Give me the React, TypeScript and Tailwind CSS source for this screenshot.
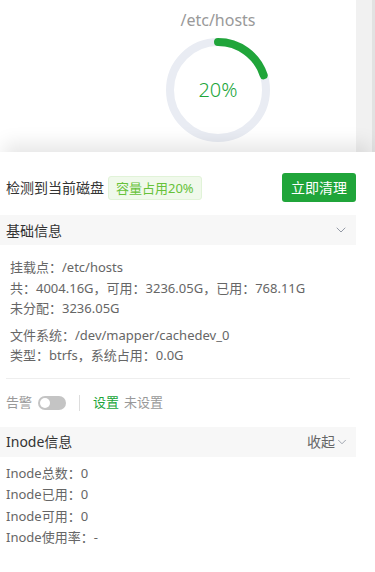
import { ChevronDownIcon } from "lucide-react";

const FONT = "font-['Noto_Sans','Noto_Sans_CJK_SC',sans-serif]";

function Ring({ percent }: { percent: number }) {
    const r = 48;
    const c = 2 * Math.PI * r;
    return (
        <div className="relative size-[104px]">
            <svg viewBox="0 0 104 104" className="size-[104px] -rotate-90">
                <circle cx="52" cy="52" r={r} fill="none" stroke="#e9ecf3" strokeWidth="8" />
                <circle
                    cx="52"
                    cy="52"
                    r={r}
                    fill="none"
                    stroke="#20a53a"
                    strokeWidth="8"
                    strokeLinecap="round"
                    strokeDasharray={`${(c * percent) / 100} ${c}`}
                />
            </svg>
            <div className="absolute inset-0 flex items-center justify-center text-[20px] font-light text-[#20a53a]">
                {percent}%
            </div>
        </div>
    );
}

export default function App() {
    return (
        <div className={`${FONT} h-[572px] w-[375px] overflow-hidden bg-white`}>
            {/* top: disk ring */}
            <div className="flex h-[152px]">
                <div className="relative flex w-[356px] flex-col items-center pt-[8px]">
                    <span className="absolute left-[-5px] top-[12px] text-[14px] leading-[20px] text-[#999]">:</span>
                    <div className="ml-[80px] text-[16px] leading-[24px] text-[#999]">/etc/hosts</div>
                    <div className="ml-[80px] mt-[6px]">
                        <Ring percent={20} />
                    </div>
                </div>
                <div className="w-[16px] bg-[#f1f1f1]" />
                <div className="w-[3px] bg-[#e2e2e2]" />
            </div>

            {/* bottom sheet */}
            <div className="relative z-10 h-[420px] bg-white shadow-[0_-12px_18px_-4px_rgba(0,0,0,0.1)]">
                <div className="w-[356px]">
                    <div className="flex items-center justify-between pl-[6px] pt-[21px]">
                        <div className="flex items-center gap-[4px]">
                            <span className="text-[14px] leading-[20px] text-[#333]">检测到当前磁盘</span>
                            <span className="rounded-[3px] border border-[#e1f3d8] bg-[#f0f9eb] px-[7px] text-[13px] leading-[22px] text-[#67c23a]">
                                容量占用20%
                            </span>
                        </div>
                        <button
                            type="button"
                            className="h-[29px] w-[74px] rounded-[3px] bg-[#20a53a] text-[14px] text-white"
                        >
                            立即清理
                        </button>
                    </div>

                    <div className="mt-[13px] flex h-[30px] items-center justify-between bg-[#f7f7f7] pl-[6px] pr-[7px]">
                        <span className="text-[14px] text-[#333]">基础信息</span>
                        <ChevronDownIcon className="size-[16px] text-[#7a8290]" strokeWidth={1.2} />
                    </div>

                    <div className="px-[10px] pt-[12px] text-[13px] leading-[20.5px] text-[#666]">
                        <div>挂载点：/etc/hosts</div>
                        <div>共：4004.16G，可用：3236.05G，已用：768.11G</div>
                        <div>未分配：3236.05G</div>
                        <div className="mt-[6px]">文件系统：/dev/mapper/cachedev_0</div>
                        <div>类型：btrfs，系统占用：0.0G</div>
                    </div>

                    <div className="mx-[6px] mt-[12px] h-px bg-[#eee]" />

                    <div className="flex h-[48px] items-center pl-[6px] text-[13px] text-[#999]">
                        <span>告警</span>
                        <span className="ml-[6px] flex h-[14px] w-[28px] items-center rounded-full bg-[#c4c4c4] px-[2px]">
                            <span className="size-[10px] rounded-full bg-white" />
                        </span>
                        <span className="mx-[13px] h-[16px] w-px bg-[#ddd]" />
                        <span className="text-[#20a53a]">设置</span>
                        <span className="ml-[5px]">未设置</span>
                    </div>

                    <div className="flex h-[30px] items-center justify-between bg-[#f7f7f7] pl-[6px] pr-[7px]">
                        <span className="text-[14px] text-[#333]">Inode信息</span>
                        <span className="flex items-center text-[14px] text-[#666]">
                            收起
                            <ChevronDownIcon className="size-[14px] text-[#7a8290]" strokeWidth={1.2} />
                        </span>
                    </div>

                    <div className="pl-[6px] pt-[6px] text-[13px] leading-[21.5px] text-[#666]">
                        <div>Inode总数：0</div>
                        <div>Inode已用：0</div>
                        <div>Inode可用：0</div>
                        <div>Inode使用率：-</div>
                    </div>
                </div>
            </div>
        </div>
    );
}
